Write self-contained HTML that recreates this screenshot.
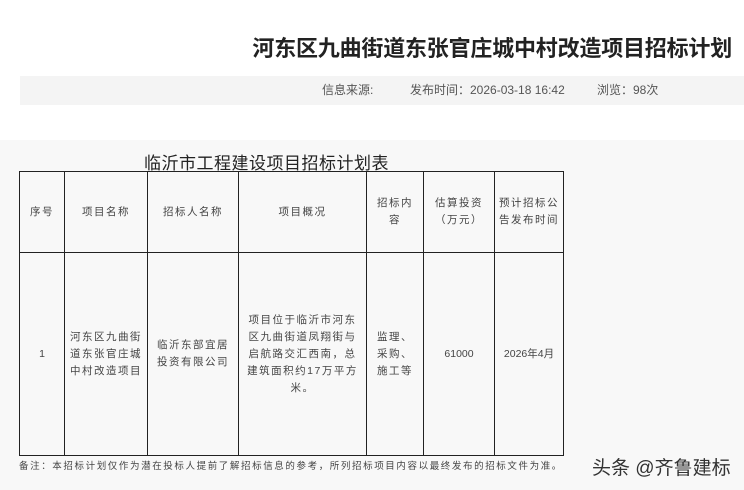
<!DOCTYPE html>
<html><head><meta charset="utf-8"><style>
*{margin:0;padding:0;box-sizing:border-box}
body{width:744px;height:490px;overflow:hidden;background:#fff;font-family:"Liberation Sans","Noto Sans CJK SC",sans-serif;position:relative;color:#333}
.t{position:absolute;left:0;right:12px;top:31px;text-align:right;font-size:22px;font-weight:bold;color:#222;letter-spacing:-0.2px}
.bar{position:absolute;left:20px;top:76px;width:724px;height:29px;background:#f4f4f4;font-size:12px;color:#555;line-height:29px}
.bar span{position:absolute;top:0}
.gray{position:absolute;left:0;top:140px;width:744px;height:350px;background:#f8f8f8}
.h2{position:absolute;left:144px;top:149px;font-size:17px;color:#222;letter-spacing:0.5px}
table{position:absolute;left:19px;top:171px;border-collapse:collapse;font-size:10.5px;color:#444;table-layout:fixed}
td{border:1px solid #222;text-align:center;vertical-align:middle;padding:0;line-height:17px;white-space:nowrap;letter-spacing:1.5px}
td.n{letter-spacing:0}
.note{position:absolute;left:19px;top:458px;font-size:9.5px;color:#444;letter-spacing:1.6px;white-space:nowrap}
.wm{position:absolute;left:592px;top:453px;font-size:19px;color:#333}
</style></head><body>
<div class="t">河东区九曲街道东张官庄城中村改造项目招标计划</div>
<div class="bar"><span style="left:302px">信息来源:</span><span style="left:390px">发布时间：2026-03-18 16:42</span><span style="left:577px">浏览：98次</span></div>
<div class="gray"></div>
<div class="h2">临沂市工程建设项目招标计划表</div>
<table>
<colgroup><col style="width:45px"><col style="width:83px"><col style="width:91px"><col style="width:128px"><col style="width:57px"><col style="width:71px"><col style="width:69px"></colgroup>
<tr style="height:81px"><td>序号</td><td>项目名称</td><td>招标人名称</td><td>项目概况</td><td>招标内<br>容</td><td>估算投资<br>（万元）</td><td>预计招标公<br>告发布时间</td></tr>
<tr style="height:203px"><td class="n">1</td><td>河东区九曲街<br>道东张官庄城<br>中村改造项目</td><td>临沂东部宜居<br>投资有限公司</td><td>项目位于临沂市河东<br>区九曲街道凤翔街与<br>启航路交汇西南，总<br>建筑面积约17万平方<br>米。</td><td>监理、<br>采购、<br>施工等</td><td class="n">61000</td><td class="n">2026年4月</td></tr>
</table>
<div class="note">备注：本招标计划仅作为潜在投标人提前了解招标信息的参考，所列招标项目内容以最终发布的招标文件为准。</div>
<div class="wm">头条 @齐鲁建标</div>
</body></html>
